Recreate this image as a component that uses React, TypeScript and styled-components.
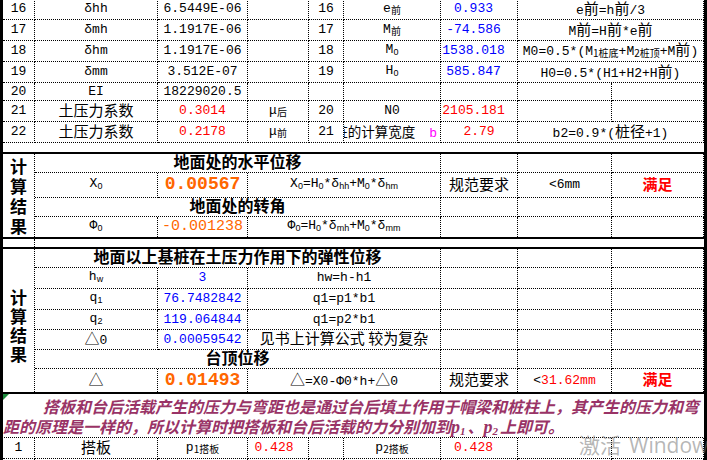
import React from 'react';
import styled, { createGlobalStyle } from 'styled-components';

const BLUE = '#0000ff';
const RED = '#ff0000';
const ORANGE = '#ff6600';
const MAGENTA = '#ff00ff';
const PLUM = '#993366';

const MONO = '"Liberation Mono", "Noto Sans CJK SC", monospace';
const CJK = '"Noto Sans CJK SC", sans-serif';

const Global = createGlobalStyle`
  html, body { margin: 0; padding: 0; background: #fff; }
  body { font-family: ${MONO}; color: #000; }
`;

const Page = styled.div`
  position: relative;
  width: 707px;
  height: 460px;
  overflow: hidden;
  background: #fff;
`;

const Grid = styled.div<{ $rows: string; $top?: boolean; $bottom?: boolean; $shift?: number }>`
  display: grid;
  grid-template-columns: 32px 123px 90px 61px 35px 97px 77px 94px 92px;
  grid-template-rows: ${p => p.$rows};
  width: 707px;
  box-sizing: border-box;
  border-left: 3px solid #000;
  border-right: 3px solid #000;
  border-top: ${p => (p.$top ? '2px solid #000' : '0')};
  border-bottom: ${p => (p.$bottom ? '2px solid #000' : '0')};
  margin-top: ${p => p.$shift ?? 0}px;
`;

const Box = styled.div<{
  $span?: number;
  $rspan?: number;
  $nb?: boolean;
  $nr?: boolean;
  $c?: string;
  $pr?: number;
  $pt?: number;
  $justify?: string;
  $clip?: boolean;
}>`
  grid-column: span ${p => p.$span ?? 1};
  grid-row: span ${p => p.$rspan ?? 1};
  min-width: 0;
  box-sizing: border-box;
  border-right: ${p => (p.$nr ? '0' : '1px dotted #000')};
  border-bottom: ${p => (p.$nb ? '0' : '1px dotted #000')};
  display: flex;
  align-items: center;
  justify-content: ${p => p.$justify ?? 'center'};
  padding-right: ${p => p.$pr ?? 0}px;
  padding-top: ${p => p.$pt ?? 0}px;
  overflow: ${p => (p.$clip ? 'hidden' : 'visible')};
  white-space: nowrap;
  font-size: 13px;
  line-height: 16px;
  color: ${p => p.$c ?? '#000'};
`;

const Inner = styled.span`
  flex-shrink: 0;
  white-space: nowrap;
`;

type CP = {
  span?: number;
  rspan?: number;
  nb?: boolean;
  nr?: boolean;
  c?: string;
  pr?: number;
  pt?: number;
  justify?: string;
  clip?: boolean;
  children?: React.ReactNode;
};

const C = ({ span, rspan, nb, nr, c, pr, pt, justify, clip, children }: CP) => (
  <Box
    $span={span}
    $rspan={rspan}
    $nb={nb}
    $nr={nr}
    $c={c}
    $pr={pr}
    $pt={pt}
    $justify={justify}
    $clip={clip}
  >
    <Inner>{children}</Inner>
  </Box>
);

const Zh = styled.span<{ $s?: number; $b?: boolean; $c?: string }>`
  font-family: ${CJK};
  font-size: ${p => p.$s ?? 15}px;
  font-weight: ${p => (p.$b ? 700 : 400)};
  color: ${p => p.$c ?? 'inherit'};
`;

const Sub = styled.span<{ $cjk?: boolean }>`
  font-family: ${p => (p.$cjk ? CJK : '"Liberation Sans", sans-serif')};
  font-size: ${p => (p.$cjk ? 10 : 9)}px;
  vertical-align: -2px;
`;

const MagB = styled.span`
  margin-left: 14px;
  color: ${MAGENTA};
  font-family: ${MONO};
  font-size: 13px;
`;

const Big = styled.span`
  font-family: ${MONO};
  font-size: 18px;
  font-weight: 700;
`;

const Mid = styled.span`
  font-family: ${MONO};
  font-size: 15px;
`;

const Title = styled.span`
  font-family: ${CJK};
  font-size: 16px;
  font-weight: 700;
`;

const Vert = styled.div<{ $lh: number; $pt?: number }>`
  display: flex;
  flex-direction: column;
  align-items: center;
  padding-top: ${p => p.$pt ?? 0}px;
  font-family: ${CJK};
  font-size: 17px;
  font-weight: 700;
  line-height: ${p => p.$lh}px;
`;

const Note = styled.div`
  position: relative;
  width: 707px;
  height: 44px;
  box-sizing: border-box;
  border-left: 3px solid #000;
  border-right: 3px solid #000;
  border-bottom: 1px dotted #000;
  padding-top: 2px;
  color: ${PLUM};
  font-family: ${CJK};
  font-size: 16px;
  font-weight: 700;
  font-style: italic;
`;

const NoteLine = styled.div<{ $indent?: number }>`
  height: 20px;
  line-height: 20px;
  padding-left: ${p => p.$indent ?? 0}px;
  white-space: nowrap;
`;

const NoteP = styled.span`
  font-family: "Liberation Serif", serif;
  font-size: 18px;
`;

const NoteSub = styled.span`
  font-family: "Liberation Serif", serif;
  font-size: 11px;
  vertical-align: -2px;
  margin-right: 2px;
`;

const Corner = styled.div`
  position: absolute;
  left: 0;
  top: 0;
  width: 0;
  height: 0;
  border-top: 6px solid #1e8a3c;
  border-right: 6px solid transparent;
`;

const Watermark = styled.div`
  position: absolute;
  left: 579px;
  top: 429px;
  display: flex;
  align-items: baseline;
  gap: 8px;
  color: rgba(110, 110, 110, 0.5);
  font-size: 21px;
  white-space: nowrap;
  pointer-events: none;
`;

const WmZh = styled.span`
  font-family: ${CJK};
`;

const WmEn = styled.span`
  font-family: "Open Sans", "Noto Sans", sans-serif;
`;

const Lt = styled.span`
  color: #000;
`;

export default function App() {
  return (
    <Page>
      <Global />
      <Grid $rows="21px 21px 21px 21px 18px 21px 21px" $shift={-1}>
        {/* 16 */}
        <C>16</C>
        <C>δhh</C>
        <C>6.5449E-06</C>
        <C />
        <C>16</C>
        <C>e<Sub $cjk>前</Sub></C>
        <C c={BLUE} pr={11}>0.933</C>
        <C span={2}>e<Zh>前</Zh>=h<Zh>前</Zh>/3</C>
        {/* 17 */}
        <C>17</C>
        <C>δmh</C>
        <C>1.1917E-06</C>
        <C />
        <C>17</C>
        <C>M<Sub $cjk>前</Sub></C>
        <C c={BLUE} pr={11}>-74.586</C>
        <C span={2}>M<Zh>前</Zh>=H<Zh>前</Zh>*e<Zh>前</Zh></C>
        {/* 18 */}
        <C>18</C>
        <C>δhm</C>
        <C>1.1917E-06</C>
        <C />
        <C>18</C>
        <C>M<Sub>0</Sub></C>
        <C c={BLUE} pr={11}>1538.018</C>
        <C span={2}>
          M0=0.5*(M<Sub $cjk>1桩底</Sub>+M<Sub $cjk>2桩顶</Sub>+M<Zh>前</Zh>)
        </C>
        {/* 19 */}
        <C>19</C>
        <C>δmm</C>
        <C>3.512E-07</C>
        <C />
        <C>19</C>
        <C>H<Sub>0</Sub></C>
        <C c={BLUE} pr={11}>585.847</C>
        <C span={2}>H0=0.5*(H1+H2+H<Zh>前</Zh>)</C>
        {/* 20 */}
        <C>20</C>
        <C>EI</C>
        <C>18229020.5</C>
        <C />
        <C />
        <C />
        <C />
        <C />
        <C />
        {/* 21 */}
        <C>21</C>
        <C><Zh>土压力系数</Zh></C>
        <C c={RED}>0.3014</C>
        <C>μ<Sub $cjk>后</Sub></C>
        <C>20</C>
        <C>N0</C>
        <C c={RED} pr={11}>2105.181</C>
        <C />
        <C />
        {/* 22 */}
        <C>22</C>
        <C><Zh>土压力系数</Zh></C>
        <C c={RED}>0.2178</C>
        <C>μ<Sub $cjk>前</Sub></C>
        <C>21</C>
        <C justify="flex-end" pr={3} clip>
          <Zh $s={13.5}>桩的计算宽度</Zh>
          <MagB>b</MagB>
        </C>
        <C c={RED}>2.79</C>
        <C span={2}>b2=0.9*(<Zh>桩径</Zh>+1)</C>
      </Grid>

      <Grid $rows="9px">
        <C span={9} nb nr />
      </Grid>

      <Grid $rows="19px 25px 19px 20px" $top $bottom>
        <C rspan={4} nb>
          <Vert $lh={20}>
            <span>计</span>
            <span>算</span>
            <span>结</span>
            <span>果</span>
          </Vert>
        </C>
        <C span={5}><Title>地面处的水平位移</Title></C>
        <C />
        <C />
        <C />

        <C>X<Sub>0</Sub></C>
        <C c={ORANGE}><Big>0.00567</Big></C>
        <C span={3}>
          X<Sub>0</Sub>=H<Sub>0</Sub>*δ<Sub>hh</Sub>+M<Sub>0</Sub>*δ<Sub>hm</Sub>
        </C>
        <C><Zh>规范要求</Zh></C>
        <C>&lt;6mm</C>
        <C><Zh $b $c={RED}>满足</Zh></C>

        <C span={5}><Title>地面处的转角</Title></C>
        <C />
        <C />
        <C />

        <C nb>Φ<Sub>0</Sub></C>
        <C nb c={ORANGE}><Mid>-0.001238</Mid></C>
        <C nb span={3}>
          Φ<Sub>0</Sub>=H<Sub>0</Sub>*δ<Sub>mh</Sub>+M<Sub>0</Sub>*δ<Sub>mm</Sub>
        </C>
        <C nb />
        <C nb />
        <C nb />
      </Grid>

      <Grid $rows="8px">
        <C nb />
        <C span={8} nb nr />
      </Grid>

      <Grid $rows="19px 21px 21px 20px 20px 19px 23px" $top $bottom>
        <C rspan={7} nb>
          <Vert $lh={19} $pt={8}>
            <span>计</span>
            <span>算</span>
            <span>结</span>
            <span>果</span>
          </Vert>
        </C>
        <C span={5}><Title>地面以上基桩在土压力作用下的弹性位移</Title></C>
        <C />
        <C />
        <C />

        <C>h<Sub>w</Sub></C>
        <C c={BLUE}>3</C>
        <C span={3}>hw=h-h1</C>
        <C />
        <C />
        <C />

        <C>q<Sub>1</Sub></C>
        <C c={BLUE}>76.7482842</C>
        <C span={3}>q1=p1*b1</C>
        <C />
        <C />
        <C />

        <C>q<Sub>2</Sub></C>
        <C c={BLUE}>119.064844</C>
        <C span={3}>q1=p2*b1</C>
        <C />
        <C />
        <C />

        <C><Zh>△</Zh>0</C>
        <C c={BLUE}>0.00059542</C>
        <C span={3}><Zh>见书上计算公式 较为复杂</Zh></C>
        <C />
        <C />
        <C />

        <C span={5}><Title>台顶位移</Title></C>
        <C />
        <C />
        <C />

        <C nb><Zh>△</Zh></C>
        <C nb c={ORANGE}><Big>0.01493</Big></C>
        <C nb span={3}>
          <Zh>△</Zh>=X0-Φ0*h+<Zh>△</Zh>0
        </C>
        <C nb><Zh>规范要求</Zh></C>
        <C nb c={RED}><Lt>&lt;</Lt>31.62mm</C>
        <C nb><Zh $b $c={RED}>满足</Zh></C>
      </Grid>

      <Note>
        <Corner />
        <NoteLine $indent={40}>
          搭板和台后活载产生的压力与弯距也是通过台后填土作用于帽梁和桩柱上，其产生的压力和弯
        </NoteLine>
        <NoteLine>
          距的原理是一样的，所以计算时把搭板和台后活载的力分别加到<NoteP>p</NoteP><NoteSub>1</NoteSub>、<NoteP>p</NoteP><NoteSub>2</NoteSub>上即可。
        </NoteLine>
      </Note>

      <Grid $rows="21px 21px">
        <C>1</C>
        <C><Zh>搭板</Zh></C>
        <C>p<Sub $cjk>1搭板</Sub></C>
        <C c={RED} pr={8}>0.428</C>
        <C />
        <C>p<Sub $cjk>2搭板</Sub></C>
        <C c={RED} pr={11}>0.428</C>
        <C />
        <C />
        <C />
        <C />
        <C />
        <C />
        <C />
        <C />
        <C />
        <C />
        <C />
      </Grid>

      <Watermark>
        <WmZh>激活</WmZh>
        <WmEn>Windows</WmEn>
      </Watermark>
    </Page>
  );
}
